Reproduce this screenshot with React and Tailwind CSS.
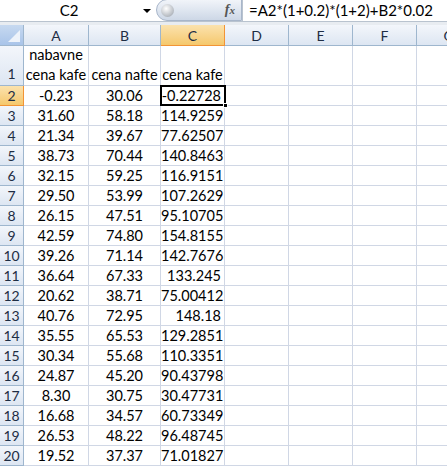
import React from 'react';

const rows = [
  ['-0.23', '30.06', '-0.22728'],
  ['31.60', '58.18', '114.9259'],
  ['21.34', '39.67', '77.62507'],
  ['38.73', '70.44', '140.8463'],
  ['32.15', '59.25', '116.9151'],
  ['29.50', '53.99', '107.2629'],
  ['26.15', '47.51', '95.10705'],
  ['42.59', '74.80', '154.8155'],
  ['39.26', '71.14', '142.7676'],
  ['36.64', '67.33', '133.245'],
  ['20.62', '38.71', '75.00412'],
  ['40.76', '72.95', '148.18'],
  ['35.55', '65.53', '129.2851'],
  ['30.34', '55.68', '110.3351'],
  ['24.87', '45.20', '90.43798'],
  ['8.30', '30.75', '30.47731'],
  ['16.68', '34.57', '60.73349'],
  ['26.53', '48.22', '96.48745'],
  ['19.52', '37.37', '71.01827'],
];

const cols = [
  { name: 'A', w: 'w-[65px]' },
  { name: 'B', w: 'w-[72px]' },
  { name: 'C', w: 'w-[64px]' },
  { name: 'D', w: 'w-[64px]' },
  { name: 'E', w: 'w-[64px]' },
  { name: 'F', w: 'w-[64px]' },
  { name: 'G', w: 'w-[64px]' },
];

const hdr = 'bg-gradient-to-b from-[#f3f6fb] to-[#dde6f2] border-r border-b border-[#9eb6ce] text-[#1e2d44]';
const hdrSel = 'bg-gradient-to-b from-[#fbe2ad] to-[#f5c86c] border-r border-b border-[#f29436] text-[#1e2d44]';
const cell = 'border-r border-b border-[#d0d7e5] shrink-0';

function RowHead({ n, sel, h }) {
  return (
    <div className={`w-[24px] shrink-0 ${h} flex items-center justify-center text-[14px] ${sel ? hdrSel : hdr}`}>
      <span className={n === 1 ? 'self-end pb-[1px]' : ''}>{n}</span>
    </div>
  );
}

export default function App() {
  return (
    <div className="w-[447px] h-[466px] overflow-hidden bg-white text-black" style={{ fontFamily: 'Lato, "Liberation Sans", sans-serif' }}>
      {/* formula bar */}
      <div className="h-[22px] flex items-center border-b border-[#b9c3cf] bg-white">
        <div className="w-[138px] text-center text-[15px] leading-none">C2</div>
        <div className="w-[18px] flex justify-center">
          <div className="w-0 h-0 border-l-[4px] border-r-[4px] border-t-[4px] border-l-transparent border-r-transparent border-t-black" />
        </div>
        <div className="relative w-[86px] h-[22px] flex items-center rounded-l-full border border-[#a8b6ca] bg-gradient-to-b from-[#f1f4f9] via-[#dfe6f0] to-[#cdd7e6] -mt-[1px]">
          <div className="ml-[4px] w-[13px] h-[13px] rounded-full bg-[radial-gradient(circle_at_40%_35%,#ffffff,#b4b9c0_70%,#8d949c)]" />
          <span className="ml-auto mr-[6px] text-[14px] italic font-bold text-[#555] leading-none" style={{ fontFamily: '"Liberation Serif", serif' }}>f<span className="text-[11px]">x</span></span>
        </div>
        <div className="flex-1 h-full pl-[6px] flex items-center text-[15px] leading-none border-l border-[#b9c3cf]">
          =A2*(1+0.2)*(1+2)+B2*0.02
        </div>
      </div>
      <div className="h-[3px] bg-[#e8ecf1]" />

      {/* grid */}
      <div className="relative">
        {/* column header row */}
        <div className="flex h-[21px] text-[14px]">
          <div className="w-[24px] shrink-0 relative bg-gradient-to-b from-[#c7d9f0] to-[#a9c4e9] border-r border-b border-[#9eb6ce]">
            <div className="absolute right-[3px] bottom-[3px] w-0 h-0 border-b-[12px] border-l-[12px] border-l-transparent border-b-[#eef3fa]" />
          </div>
          {cols.map((c) => (
            <div key={c.name} className={`${c.w} shrink-0 flex items-center justify-center ${c.name === 'C' ? hdrSel : hdr}`}>
              {c.name}
            </div>
          ))}
        </div>

        {/* row 1 */}
        <div className="flex h-[40px] text-[14.5px] leading-[20px]">
          <RowHead n={1} h="h-[40px]" />
          <div className={`${cell} w-[65px] flex flex-col items-center justify-end`}>
            <span>nabavne</span>
            <span>cena kafe</span>
          </div>
          <div className={`${cell} w-[72px] flex items-end justify-center`}>cena nafte</div>
          <div className={`${cell} w-[64px] flex items-end justify-center`}>cena kafe</div>
          <div className={`${cell} w-[64px]`} />
          <div className={`${cell} w-[64px]`} />
          <div className={`${cell} w-[64px]`} />
          <div className={`${cell} w-[64px]`} />
        </div>

        {rows.map((r, i) => (
          <div key={i} className="flex h-[20px] text-[14.5px] leading-[19px]">
            <RowHead n={i + 2} sel={i === 0} h="h-[20px]" />
            <div className={`${cell} w-[65px] text-center`}>{r[0]}</div>
            <div className={`${cell} w-[72px] text-center`}>{r[1]}</div>
            <div className={`${cell} w-[64px] text-right pr-[3px]`}>{r[2]}</div>
            <div className={`${cell} w-[64px]`} />
            <div className={`${cell} w-[64px]`} />
            <div className={`${cell} w-[64px]`} />
            <div className={`${cell} w-[64px]`} />
          </div>
        ))}

        {/* active cell C2 */}
        <div className="absolute left-[160px] top-[60px] w-[66px] h-[21px] border-[2px] border-black pointer-events-none">
          <div className="absolute -right-[4px] -bottom-[4px] w-[5px] h-[5px] bg-black border border-white" />
        </div>
      </div>
    </div>
  );
}
